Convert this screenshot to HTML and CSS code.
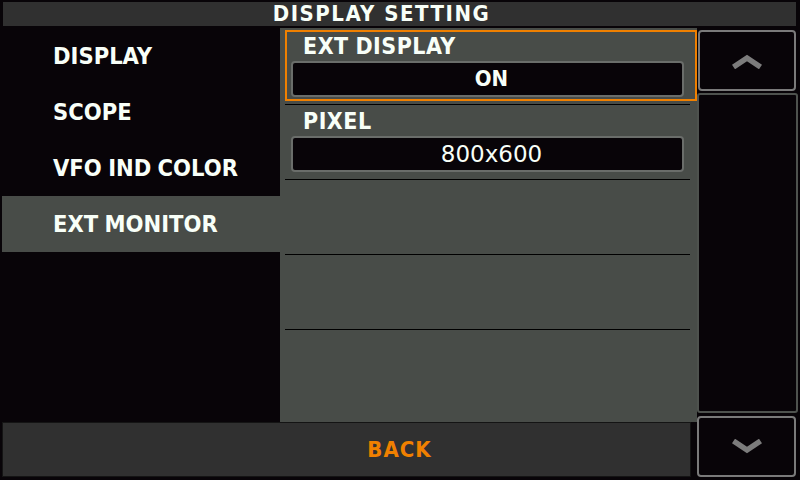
FILE: index.html
```html
<!DOCTYPE html>
<html>
<head>
<meta charset="utf-8">
<link rel="stylesheet" href="styles.css">
</head>
<body>
<div class="screen">
  <div class="title">DISPLAY SETTING</div>
  <div class="menu">
    <div class="item">DISPLAY</div>
    <div class="item">SCOPE</div>
    <div class="item">VFO IND COLOR</div>
    <div class="item selected">EXT MONITOR</div>
  </div>
  <div class="panel">
    <div class="row">
      <div class="frame">
        <div class="label">EXT DISPLAY</div>
        <div class="value bold">ON</div>
      </div>
    </div>
    <div class="row">
      <div class="plain">
        <div class="label">PIXEL</div>
        <div class="value">800x600</div>
      </div>
    </div>
    <div class="row"></div>
    <div class="row"></div>
  </div>
  <div class="scroll">
    <div class="sbtn up">
      <svg width="30" height="16" viewBox="0 0 30 16"><path d="M1.5 14 L15 5 L28.5 14" fill="none" stroke="#7c7c7c" stroke-width="5.5" stroke-linejoin="miter"/></svg>
    </div>
    <div class="track"></div>
    <div class="sbtn down">
      <svg width="30" height="16" viewBox="0 0 30 16"><path d="M1.5 2 L15 11 L28.5 2" fill="none" stroke="#7c7c7c" stroke-width="5.5" stroke-linejoin="miter"/></svg>
    </div>
  </div>
  <div class="back">BACK</div>
</div>
</body>
</html>
```
FILE: styles.css
```css
html, body {
  margin: 0;
  padding: 0;
  background: #080408;
}
.screen {
  width: 800px;
  height: 480px;
  display: grid;
  grid-template-columns: 280px 417px 103px;
  grid-template-rows: 28px 394px 58px;
  background: #080408;
  font-family: "DejaVu Sans Condensed", "DejaVu Sans", sans-serif;
  font-weight: bold;
  color: #f8fff8;
  overflow: hidden;
}
.title {
  grid-column: 1 / -1;
  grid-row: 1;
  margin: 2px 4px 2px 3px;
  background: #303030;
  text-align: center;
  font-size: 22px;
  line-height: 24px;
  letter-spacing: 1.5px;
  padding-right: 36px;
}
.menu {
  grid-column: 1;
  grid-row: 2;
  display: flex;
  flex-direction: column;
}
.item {
  height: 56px;
  line-height: 56px;
  padding-left: 53px;
  font-size: 23.5px;
  word-spacing: -1px;
}
.item.selected {
  margin-left: 2px;
  padding-left: 51px;
  background: #484c48;
}
.panel {
  grid-column: 2;
  grid-row: 2;
  background: #484c48;
  padding: 2px 0 0 5px;
  box-sizing: border-box;
}
.row {
  width: 405px;
  height: 74px;
  border-bottom: 1px solid #000;
}
.frame {
  width: 412px;
  height: 71px;
  box-sizing: border-box;
  border: 2px solid #f08000;
  padding: 0 0 0 4px;
}
.plain {
  padding: 2px 0 0 6px;
}
.label {
  font-size: 23px;
  line-height: 29px;
  padding-left: 12px;
  letter-spacing: 0.5px;
  word-spacing: -1px;
}
.value {
  width: 393px;
  height: 36px;
  box-sizing: border-box;
  background: #080408;
  border: 2px solid #6a6d6a;
  border-radius: 4px;
  text-align: center;
  padding-left: 8px;
  font-family: "DejaVu Sans", sans-serif;
  font-weight: normal;
  font-size: 23px;
  line-height: 32px;
}
.value.bold {
  font-family: "DejaVu Sans Condensed", "DejaVu Sans", sans-serif;
  font-weight: bold;
  font-size: 22px;
}
.scroll {
  grid-column: 3;
  grid-row: 2 / 4;
  display: flex;
  flex-direction: column;
}
.sbtn {
  height: 61px;
  box-sizing: border-box;
  border: 2px solid #7a7a7a;
  border-radius: 4px;
  background: #080408;
  display: flex;
  align-items: center;
  justify-content: center;
}
.sbtn.up {
  margin: 2px 4px 0 1px;
}
.sbtn.down {
  margin: 3px 4px 0 0;
}
.sbtn svg {
  display: block;
}
.track {
  margin: 2px 2px 0 0;
  height: 320px;
  box-sizing: border-box;
  border: 2px solid #4e524e;
  border-radius: 3px;
  background: #080408;
}
.back {
  grid-column: 1 / 3;
  grid-row: 3;
  margin: 0 6px 3px 2px;
  background: #303030;
  border: 1px solid #141414;
  box-sizing: border-box;
  color: #f08000;
  text-align: center;
  padding-left: 106px;
  font-size: 22px;
  line-height: 53px;
  letter-spacing: 1px;
}
```
